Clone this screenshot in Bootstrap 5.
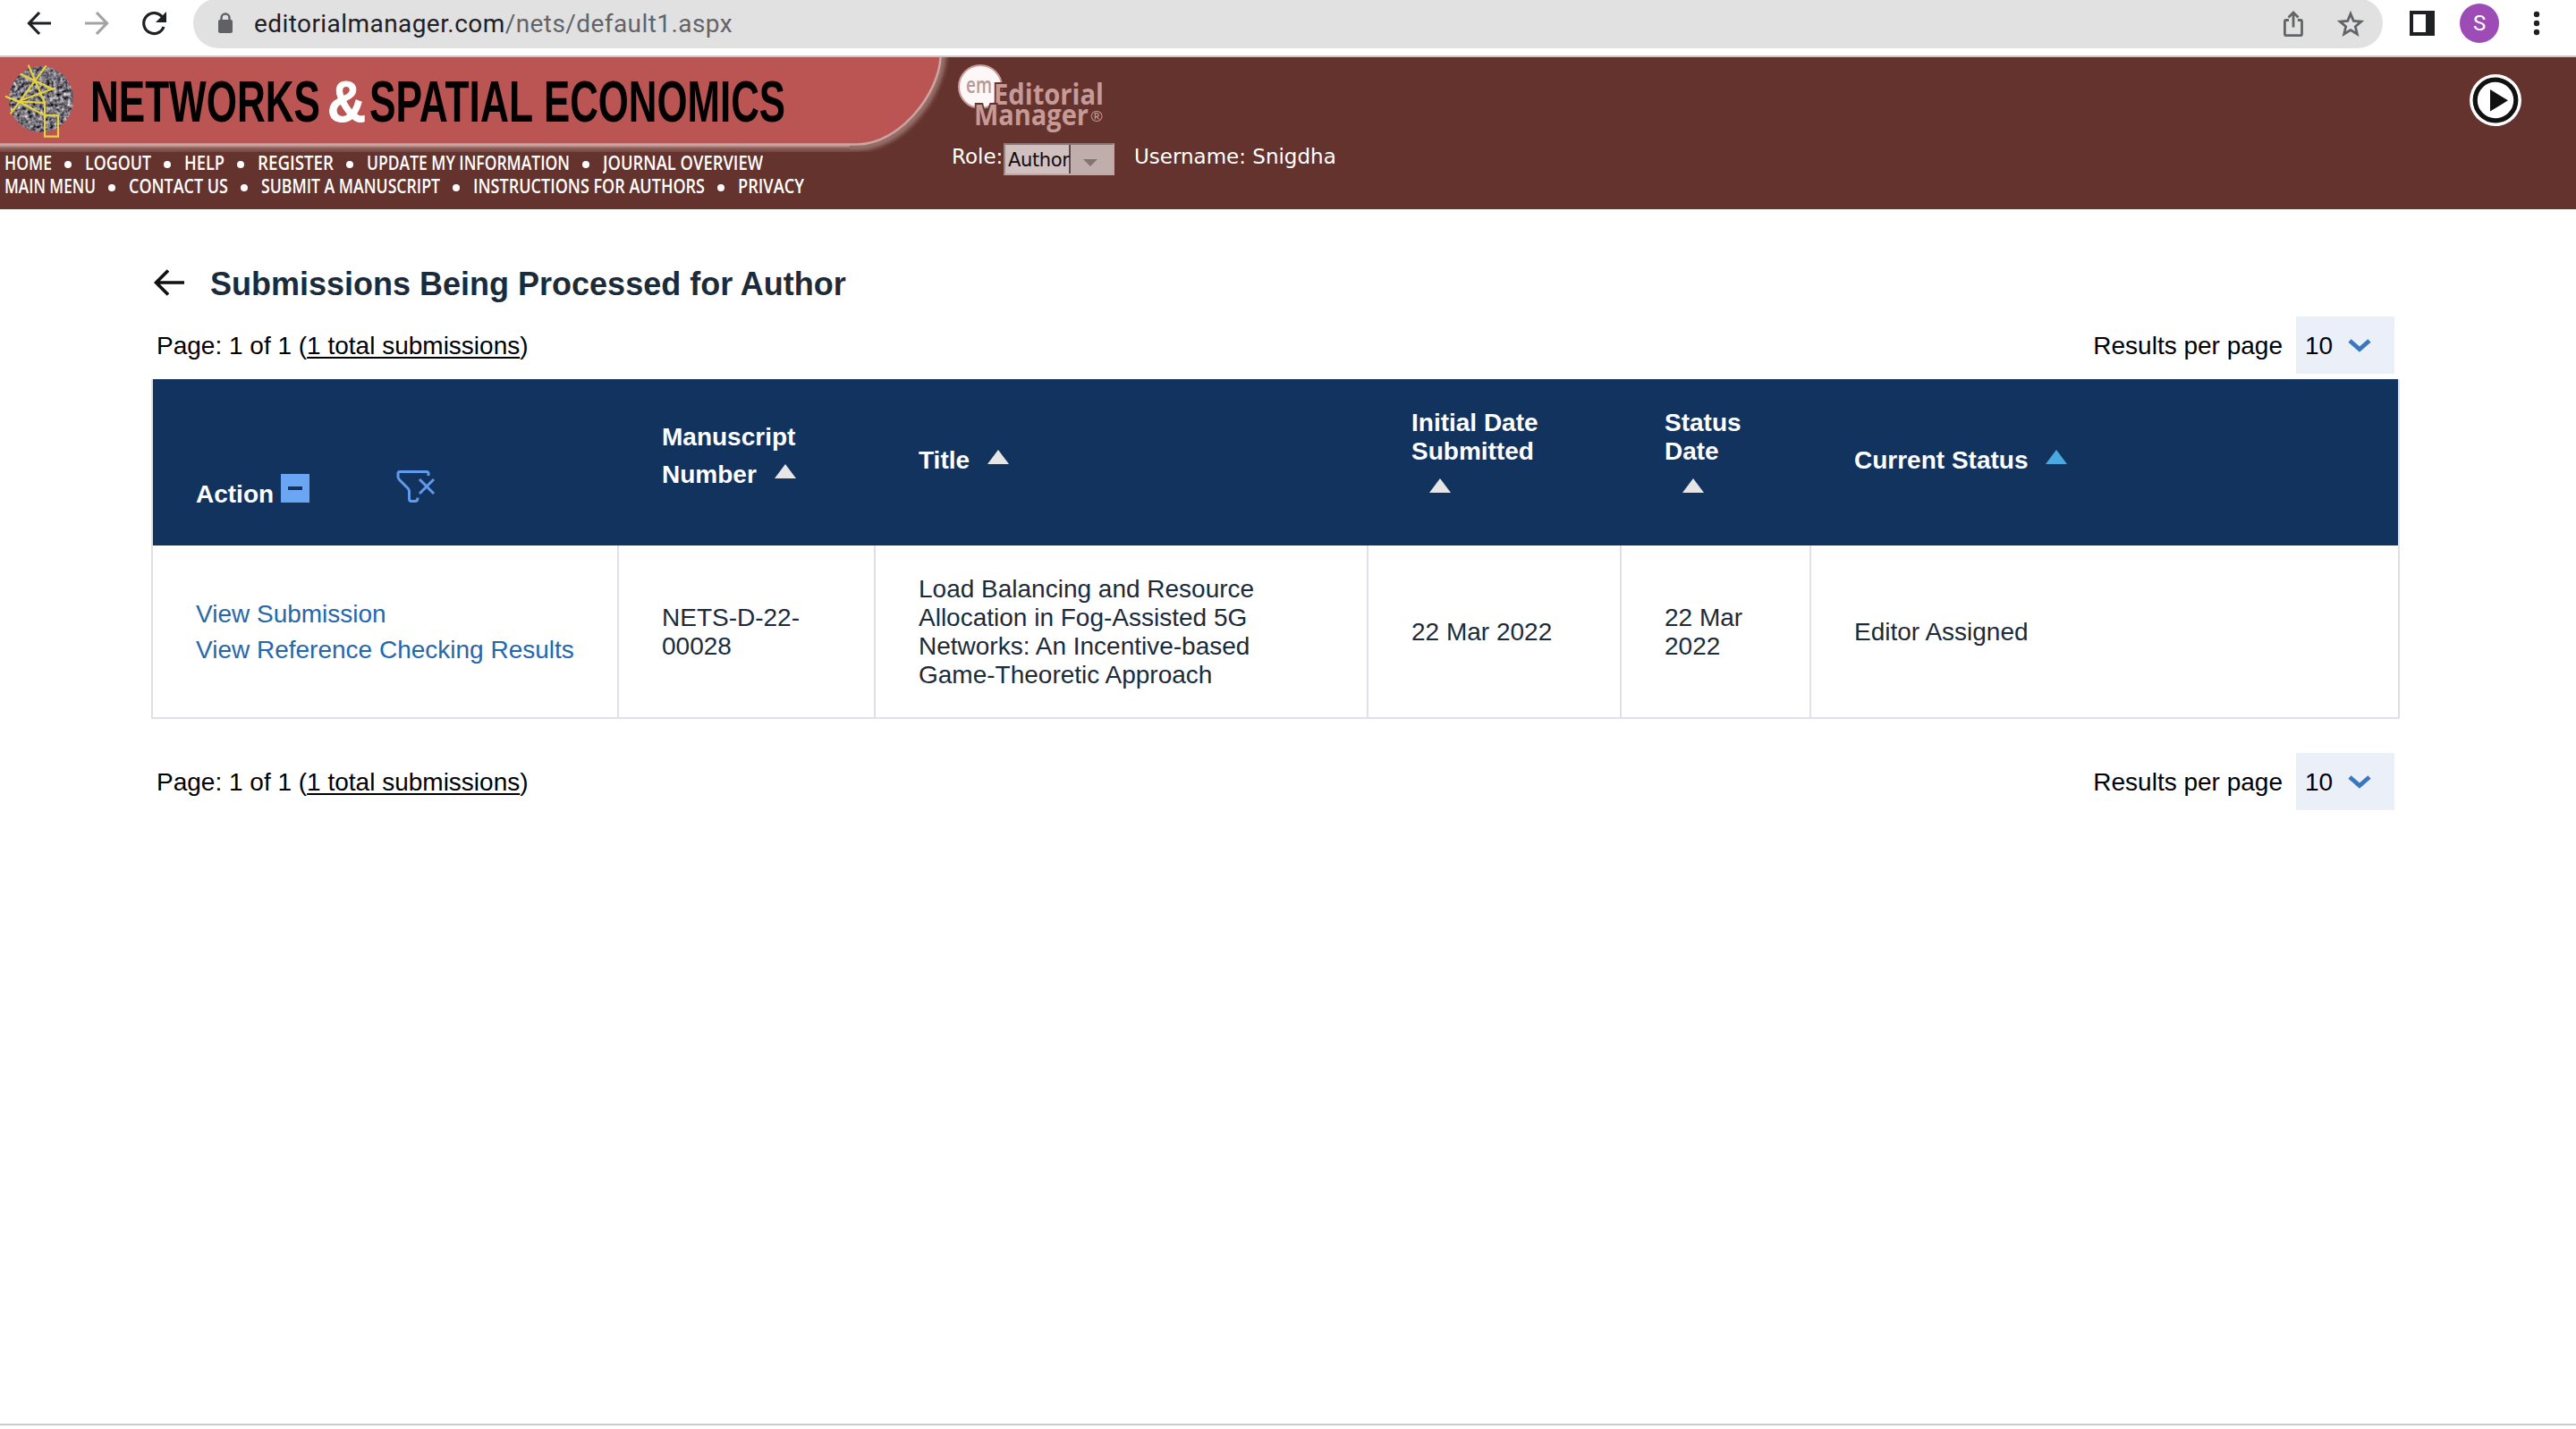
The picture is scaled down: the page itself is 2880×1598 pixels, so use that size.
<!DOCTYPE html>
<html lang="en">
<head>
<meta charset="utf-8">
<title>Editorial Manager</title>
<link href="https://cdn.jsdelivr.net/npm/bootstrap@5.3.0/dist/css/bootstrap.min.css" rel="stylesheet">
<style>
body{font-family:"Liberation Sans",Arial,sans-serif;font-size:28px;line-height:32px;color:#000;background:#fff;height:1598px;overflow:hidden}
svg{display:block;flex:none}
.browser-bar{height:64px;border-bottom:2px solid #c8caca}
.nav-icons{width:216px;flex:none}
.omnibox{height:56px;margin-top:-2px;width:2448px;border-radius:28px;background:#e1e1e1;flex:none}
.url-text{font-family:Roboto,sans-serif;font-size:28px;letter-spacing:.43px;color:#1f2023;white-space:nowrap;padding-top:2px}
.url-text span{color:#636468}
.avatar-dot{width:44px;height:44px;border-radius:50%;background:#9e4cb5;color:#fff;font:24px/44px Roboto,sans-serif;text-align:center}
.journal-bar{height:170px;background:#64332d;color:#fff}
.journal-left{width:1066px;flex:none}
.menu-line{height:26px;padding-left:5px;gap:14px}
.menu-line i{width:8px;height:8px;border-radius:50%;background:#fff;margin:2px 1px 0 0}
.menu-line text{font:600 21px "Open Sans",sans-serif;fill:#fff}
.verd{font-family:"DejaVu Sans",sans-serif;font-size:23px;line-height:30px;white-space:nowrap}
.role-label{width:58px;margin-left:-2px}
.role-box{width:124px;height:36px;background:#c0aead;border:2px solid #bda9a8;border-top-color:#8c7573;border-left-color:#9b8583}
.role-box b{font:400 21px/34px "DejaVu Sans",sans-serif;color:#140c10;width:73px;background:#d0c0c0;border-right:2px solid #5d4a4a;padding-left:3px;letter-spacing:-.35px}
.user-name{margin-left:22px}
.play-spot{padding:19px 61px 0 0}
.main-area{padding:64px 198px 0 169px}
.page-title{font-size:36px;line-height:40px;font-weight:700;color:#1c2b39;margin:0}
.pager{height:64px;padding:0 5px 0 6px}
.pager-text{padding-top:2px}
.pager a{color:#000;text-decoration-thickness:2px;text-underline-offset:3px}
.top-pager{margin:16px 0 6px}
.low-pager{margin-top:38px}
.size-pick{width:110px;height:64px;background:#ebeff8;padding:1px 0 0 10px;margin-left:15px}
.pick-arrow{margin-left:16px}
.sub-table{width:2514px;table-layout:fixed;margin:0;border-collapse:separate;border-spacing:0;border:2px solid #dee2e6;border-top:0}
.sub-table th{background:#13335f;color:#fff;height:186px;padding:0 0 0 48px;vertical-align:top;border:0}
.sub-table td{height:192px;padding:2px 0 0 48px;vertical-align:middle;border:0;border-right:2px solid #dee2e6;background:#fff;color:#1c2b39}
.sub-table td:last-child{border-right:0}
.sub-table td a{display:block;line-height:40px;color:#2667ab;text-decoration:none}
.sub-table th.pt-act{padding-top:102px}
.sub-table th.pt-num{padding-top:44px;line-height:42px}
.sub-table th.pt-one{padding-top:75px}
.sub-table th.pt-two{padding-top:33px}
.act-label{padding-top:11px;width:94px}
.filter-icon{margin-left:95px}
.tri{display:inline-block;width:0;height:0;border:12px solid transparent;border-top:0;border-bottom:16px solid #e6e6e6}
.tri-in{margin:0 0 5px 12px}
.tri-on{border-bottom-color:#4aa9e0}
.tri-row{padding:5px 0 0 20px}
.bottom-line{height:2px;margin-bottom:4px;background:#cbcbcb}
</style>
</head>
<body class="d-flex flex-column">
<header class="browser-bar d-flex flex-none">
  <svg class="nav-icons" width="216" height="56" viewBox="0 0 216 56" fill="none" stroke-width="3.2">
    <path d="M57 26H33M44 14L32.500 26L44 38" stroke="#1f2023"/>
    <path d="M95 26H119M108 14L119.500 26L108 38" stroke="#a2a3a5"/>
    <path d="M182 20A11.500 11.500 0 1 0 183 30" stroke="#1f2023"/><path d="M186 13V25H174Z" fill="#1f2023"/>
  </svg>
  <div class="omnibox d-flex align-items-center">
    <svg width="68" height="56" viewBox="216 -2 68 56"><rect x="244" y="22" width="16" height="15" rx="2" fill="#5f6165"/><path d="M247.500 23V20a4.500 4.500 0 0 1 9 0v3" fill="none" stroke="#5f6165" stroke-width="2.400"/></svg>
    <div class="url-text">editorialmanager.com<span>/nets/default1.aspx</span></div>
    <svg class="ms-auto" width="124" height="56" viewBox="2540 -2 124 56" fill="none" stroke="#636468" stroke-width="2.800">
      <path d="M2559 22.500h-3q-1.600 0-1.600 1.600v13.800q0 1.700 1.700 1.700h15.700q1.700 0 1.700-1.700V24.100q0-1.600-1.600-1.600h-3M2564 30.500V14M2558.500 19.500l5.500-5.500 5.500 5.500"/>
      <path d="M2628 15.500l3.300 7.900 8.500.7-6.500 5.600 2 8.300-7.300-4.400-7.300 4.400 2-8.300-6.500-5.600 8.500-.7Z"/>
    </svg>
  </div>
  <svg width="86" height="56" viewBox="2664 0 86 56"><path d="M2694 12h28v28h-28zM2698 16v20h14V16z" fill="#1f2023" fill-rule="evenodd"/></svg>
  <div class="avatar-dot mt-1">S</div>
  <svg width="60" height="56" viewBox="2794 0 60 56" fill="#1f2023"><circle cx="2836" cy="16" r="3.200"/><circle cx="2836" cy="26" r="3.200"/><circle cx="2836" cy="36" r="3.200"/></svg>
</header>

<section class="journal-bar d-flex">
  <div class="journal-left">
    <svg width="1066" height="106" viewBox="0 64 1066 106">
      <defs>
        <linearGradient id="edge" x1="0" y1="160" x2="0" y2="170" gradientUnits="userSpaceOnUse"><stop offset="0" stop-color="#c99a96"/><stop offset=".3" stop-color="#bd9490"/><stop offset=".6" stop-color="#8a5c57"/><stop offset="1" stop-color="#75463f"/></linearGradient>
        <filter id="soft"><feGaussianBlur stdDeviation="2"/></filter>
        <filter id="grain" x="0" y="0" width="1" height="1" color-interpolation-filters="sRGB"><feTurbulence type="fractalNoise" baseFrequency=".25" numOctaves="3" seed="4"/><feColorMatrix values="1.3 .3 0 0 -.34  1.3 .3 0 0 -.35  1.2 .3 0 0 -.27  0 0 0 0 1"/><feComposite in2="SourceGraphic" operator="in"/></filter>
      </defs>
      <path d="M0 164H958C1008 164 1052 106 1054 60" fill="none" stroke="#96706b" stroke-width="9" filter="url(#soft)"/>
      <rect y="160" width="950" height="10" fill="url(#edge)"/>
      <path d="M0 64H1051C1050 104 1006 161 958 161H0Z" fill="#ba5554"/>
      <path d="M0 161.500H958C1006 161.500 1050 104 1051.500 64" fill="none" stroke="#cfa5a1" stroke-width="2.500"/>
      <ellipse cx="46" cy="111" rx="36" ry="37" filter="url(#grain)"/>
      <g transform="translate(0 60) scale(.33333)" fill="none" stroke="#e6d23e" stroke-width="6.500"><path d="M95 38L150 165M155 40L35 202M18 143L60 160L150 165V278H195V207H150L60 160L182 116M68 68L180 120"/></g>
      <g font-family="Liberation Sans" font-weight="700" font-size="64">
        <text x="101" y="136" textLength="257" lengthAdjust="spacingAndGlyphs">NETWORKS</text>
        <text x="366" y="136" textLength="43" lengthAdjust="spacingAndGlyphs" fill="#fff" stroke="#fff" stroke-width="1">&amp;</text>
        <text x="413" y="136" textLength="183" lengthAdjust="spacingAndGlyphs">SPATIAL</text>
        <text x="608" y="136" textLength="270" lengthAdjust="spacingAndGlyphs">ECONOMICS</text>
      </g>
    </svg>
    <nav class="menu-line d-flex align-items-center">
      <svg width="53" height="26"><text y="20" textLength="53" lengthAdjust="spacingAndGlyphs">HOME</text></svg><i></i>
      <svg width="74" height="26"><text y="20" textLength="74" lengthAdjust="spacingAndGlyphs">LOGOUT</text></svg><i></i>
      <svg width="45" height="26"><text y="20" textLength="45" lengthAdjust="spacingAndGlyphs">HELP</text></svg><i></i>
      <svg width="85" height="26"><text y="20" textLength="85" lengthAdjust="spacingAndGlyphs">REGISTER</text></svg><i></i>
      <svg width="227" height="26"><text y="20" textLength="227" lengthAdjust="spacingAndGlyphs">UPDATE MY INFORMATION</text></svg><i></i>
      <svg width="179" height="26"><text y="20" textLength="179" lengthAdjust="spacingAndGlyphs">JOURNAL OVERVIEW</text></svg>
    </nav>
    <nav class="menu-line d-flex align-items-center">
      <svg width="102" height="26"><text y="20" textLength="102" lengthAdjust="spacingAndGlyphs">MAIN MENU</text></svg><i></i>
      <svg width="111" height="26"><text y="20" textLength="111" lengthAdjust="spacingAndGlyphs">CONTACT US</text></svg><i></i>
      <svg width="200" height="26"><text y="20" textLength="200" lengthAdjust="spacingAndGlyphs">SUBMIT A MANUSCRIPT</text></svg><i></i>
      <svg width="259" height="26"><text y="20" textLength="259" lengthAdjust="spacingAndGlyphs">INSTRUCTIONS FOR AUTHORS</text></svg><i></i>
      <svg width="74" height="26"><text y="20" textLength="74" lengthAdjust="spacingAndGlyphs">PRIVACY</text></svg>
    </nav>
  </div>
  <div>
    <svg width="180" height="96" viewBox="1066 64 180 96">
      <circle cx="1096" cy="97" r="24" fill="#fdf8f7" stroke="#c99a98" stroke-width="2"/>
      <text x="1080" y="104" font-family="Open Sans" font-size="25" font-weight="600" textLength="29" lengthAdjust="spacingAndGlyphs" fill="#b79a98">em</text>
      <g font-family="Open Sans" font-weight="700" font-size="33" fill="#c69a97" stroke="#64332d" stroke-width="4" paint-order="stroke">
        <text x="1111" y="117" textLength="123" lengthAdjust="spacingAndGlyphs">Editorial</text>
        <text x="1089" y="140" textLength="128" lengthAdjust="spacingAndGlyphs">Manager</text>
      </g>
      <text x="1219" y="136" font-family="Open Sans" font-size="17" fill="#c69a97">®</text>
    </svg>
    <div class="d-flex verd">
      <div class="role-label">Role:</div>
      <div class="role-box d-flex"><b>Author</b><svg width="46" height="32" viewBox="0 0 46 32"><path d="M14 16h16l-8 8z" fill="#857271"/></svg></div>
      <div class="user-name">Username: Snigdha</div>
    </div>
  </div>
  <div class="play-spot ms-auto"><svg width="58" height="58" viewBox="-29 -29 58 58"><circle r="29" fill="#fff"/><circle r="22.800" fill="none" stroke="#111" stroke-width="5.200"/><path d="M-6 -12V12.500L14 .3Z" fill="#111"/></svg></div>
</section>

<main class="main-area flex-grow-1">
  <div class="d-flex align-items-center">
    <svg width="66" height="40" viewBox="169 298 66 40" fill="none" stroke="#111" stroke-width="3.600"><path d="M206 316H175M188 302.500L174.500 316L188 329.500"/></svg>
    <h1 class="page-title">Submissions Being Processed for Author</h1>
  </div>
  <div class="pager d-flex align-items-center top-pager">
    <div class="pager-text">Page: 1 of 1 (<a href="#">1 total submissions</a>)</div>
    <div class="pager-text ms-auto">Results per page</div>
    <div class="size-pick d-flex align-items-center">10<svg class="pick-arrow" width="28" height="20" viewBox="0 0 28 20"><path d="M3 4l11 9.500L25 4" fill="none" stroke="#3a78bd" stroke-width="4.800"/></svg></div>
  </div>
  <table class="table sub-table">
    <colgroup><col style="width:521px"><col style="width:287px"><col style="width:551px"><col style="width:283px"><col style="width:212px"><col></colgroup>
    <thead><tr>
      <th class="pt-act"><div class="d-flex">
        <span class="act-label">Action</span>
        <svg width="34" height="40" viewBox="0 0 34 40"><path d="M1 4h32v32H1z" fill="#6ba6f5"/><path d="M9 18h16v4H9z" fill="#13335f"/></svg>
        <svg class="filter-icon" width="48" height="40" viewBox="442 526 48 40" fill="none" stroke="#5f9bea" stroke-width="3"><path d="M479 532V529.500q0-2-2-2H447q-2 0-2 2V533q0 2 1.500 3.500L456 546q1.500 1.500 1.500 3.500V558q0 2.500 2.500 2.500h4q3 0 3-4M469 536l16 16M485 536l-16 16"/></svg>
      </div></th>
      <th class="pt-num">Manuscript<br>Number <span class="tri tri-in"></span></th>
      <th class="pt-one">Title <span class="tri tri-in"></span></th>
      <th class="pt-two">Initial Date<br>Submitted<div class="tri-row"><span class="tri"></span></div></th>
      <th class="pt-two">Status<br>Date<div class="tri-row"><span class="tri"></span></div></th>
      <th class="pt-one">Current Status <span class="tri tri-in tri-on"></span></th>
    </tr></thead>
    <tbody><tr>
      <td><a href="#">View Submission</a><a href="#">View Reference Checking Results</a></td>
      <td>NETS-D-22-<br>00028</td>
      <td>Load Balancing and Resource<br>Allocation in Fog-Assisted 5G<br>Networks: An Incentive-based<br>Game-Theoretic Approach</td>
      <td>22 Mar 2022</td>
      <td>22 Mar<br>2022</td>
      <td>Editor Assigned</td>
    </tr></tbody>
  </table>
  <div class="pager d-flex align-items-center low-pager">
    <div class="pager-text">Page: 1 of 1 (<a href="#">1 total submissions</a>)</div>
    <div class="pager-text ms-auto">Results per page</div>
    <div class="size-pick d-flex align-items-center">10<svg class="pick-arrow" width="28" height="20" viewBox="0 0 28 20"><path d="M3 4l11 9.500L25 4" fill="none" stroke="#3a78bd" stroke-width="4.800"/></svg></div>
  </div>
</main>
<footer class="bottom-line"></footer>
<script src="https://cdn.jsdelivr.net/npm/bootstrap@5.3.0/dist/js/bootstrap.bundle.min.js"></script>
</body>
</html>
